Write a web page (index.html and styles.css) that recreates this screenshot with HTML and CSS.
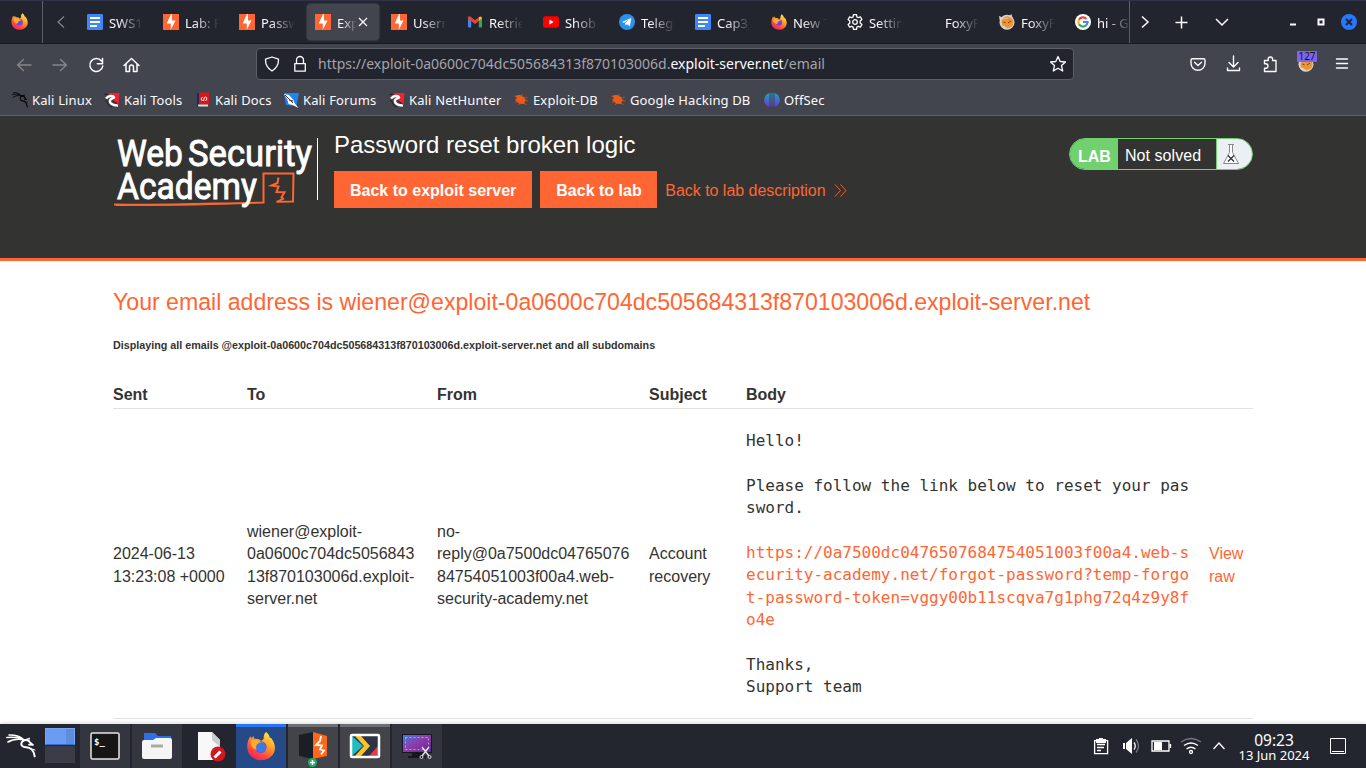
FILE: index.html
```html
<!DOCTYPE html>
<html lang="en">
<head>
<meta charset="utf-8">
<title>Exploit Server: Password reset broken logic</title>
<link rel="stylesheet" href="styles.css">
</head>
<body>
<svg class="defs" width="0" height="0" aria-hidden="true">
  <defs>
    <linearGradient id="flame" x1=".8" y1="0" x2=".2" y2="1"><stop offset="0" stop-color="#fff04a"/><stop offset=".4" stop-color="#ff9a2a"/><stop offset=".75" stop-color="#ff4141"/><stop offset="1" stop-color="#e81f6f"/></linearGradient>
    <linearGradient id="teal" x1="0" y1="0" x2="0" y2="1"><stop offset="0" stop-color="#1ba6c4"/><stop offset="1" stop-color="#6a35d8"/></linearGradient>
    <linearGradient id="screen" x1="0" y1="0" x2="1" y2="1"><stop offset="0" stop-color="#3b7de0"/><stop offset=".5" stop-color="#8e3aa6"/><stop offset="1" stop-color="#5a2a8c"/></linearGradient>
    <symbol id="firefox" viewBox="0 0 16 16"><path fill="url(#flame)" d="M10.800.3c1.500 1.200 1.900 2.300 2 3.100.5-.1.9.2 1.200.7 2.400 3.500 2.200 7.300-.3 9.600-3.200 3-8.300 2.800-11.200-.1C.1 11.200-.2 7.400 1.300 4.100L2 2.600l.8 1.100 1-1.200.6 1.600c1.500-.2 2.900.2 3.800 1.200L9.500 4C9.300 2.700 9.700 1.300 10.800.3z"/><circle cx="7.900" cy="8.600" r="3.200" fill="#7543df"/><path fill="#ffad2e" d="M2.400 5.100c2-.9 4-.4 5.500.8l1.800.4c-.4 1-2.400 1-3 1.900-.6.8.2 1.400-1 1.800C3.500 9.600 2 7.500 2.400 5.100z"/></symbol>
    <symbol id="doc" viewBox="0 0 16 16"><rect width="16" height="16" rx="1.300" fill="#4285f4"/><path stroke="#fff" stroke-width="1.800" d="M3 4h10M3 8h10M3 12h7"/></symbol>
    <symbol id="burp" viewBox="0 0 16 16"><path fill="#ff6633" d="M0 0h16v16H0z"/><path fill="#fff" d="M9 0v6.600h3.500L7.800 15.800V9.400H3.700L8 0z"/></symbol>
    <symbol id="gmail" viewBox="0 0 16 16"><path fill="#4285f4" d="M1 4.500l3.200 2.300v6.700H2a1 1 0 0 1-1-1z"/><path fill="#34a853" d="M15 4.500l-3.200 2.300v6.700H14a1 1 0 0 0 1-1z"/><path fill="#ea4335" d="M1 3c.7-1 2-.8 3.200.3L8 6.200l3.800-2.900v3.700L8 9.900 1 4.700z"/><path fill="#fbbc04" d="M11.800 3.300C13.500 2 15 2.300 15 4.700L11.800 7z"/></symbol>
    <symbol id="youtube" viewBox="0 0 16 16"><rect y="2.300" width="16" height="11.400" rx="2.500" fill="#f00"/><path fill="#fff" d="M6.400 5.500v5l4.300-2.500z"/></symbol>
    <symbol id="telegram" viewBox="0 0 16 16"><circle cx="8" cy="8" r="8" fill="#2c91ee"/><path fill="#fff" d="M2.800 7.900l9.500-3.800-1.400 8.100-3-2-1.500 1.400-.3-2.500 4.200-3.500-5.300 3.200z"/></symbol>
    <symbol id="gear" viewBox="0 0 16 16"><path fill="none" stroke="#fbfbfe" stroke-width="1.300" stroke-linejoin="round" d="M6.500.7h3l.4 2.200 1.400.8 2.100-.8 1.500 2.600-1.700 1.500v2l1.700 1.500-1.500 2.600-2.100-.8-1.400.8-.4 2.200h-3l-.4-2.200-1.400-.8-2.100.8-1.500-2.600L2.800 9V7L1.100 5.500l1.500-2.600 2.100.8 1.400-.8z"/><circle cx="8" cy="8" r="2.300" fill="none" stroke="#fbfbfe" stroke-width="1.300"/></symbol>
    <symbol id="fox" viewBox="0 0 16 16"><circle cx="8" cy="8.300" r="7.500" fill="#d9d3cc"/><circle cx="8.500" cy="8.200" r="6" fill="#ed9434"/><path fill="#d9d3cc" d="M0 2l5 2-4 4zM12.500 0l1 4.500-4-2zM2 11.500l3 .5 3 2-2 1.500z"/><path stroke="#6b421b" d="M4.500 8l2 .8M9 9l3-2"/><path stroke="#f7c176" d="M5 5l4-1"/></symbol>
    <symbol id="google" viewBox="0 0 16 16"><circle cx="8" cy="8" r="8" fill="#fff"/><g fill="none" stroke-width="2.200"><path stroke="#ea4335" d="M11.400 4.900A4.600 4.600 0 0 0 4 5.700"/><path stroke="#fbbc05" d="M4 5.700a4.600 4.600 0 0 0 0 4.600"/><path stroke="#34a853" d="M4 10.300a4.600 4.600 0 0 0 7 1.100"/><path stroke="#4285f4" d="M11 11.400A4.600 4.600 0 0 0 12.600 8H8"/></g></symbol>
    <symbol id="kali" viewBox="0 0 30 24" preserveAspectRatio="none"><g fill="none" stroke="currentColor" stroke-linecap="round" stroke-linejoin="round"><path stroke-width="1.500" d="M3 1c6-.3 10 .8 14 4M.8 3.500C6 2.800 12 3 17 5.500M2 8C6 5.500 10 5 15.500 5.500"/><path stroke-width="2" d="M23 7c-3-2-6.500-.8-7.500 1.700-.8 2.600 1 4.400 4.500 4.600 4.500.3 7.500 2 8.700 9"/><path stroke-width="1.700" d="M17 6.500c2.500-1.500 5.500-.5 7 2l3 2.500-4-.3"/><path stroke-width="1" d="M20 5.500L23.500 4l-1 3M24 14.500l5 1.500"/></g></symbol>
    <symbol id="redtool" viewBox="0 0 16 16"><path fill="#ed2330" d="M4 1h11.500L14.500 13 9 9z"/><path fill="none" stroke="#fff" stroke-width="2.500" d="M2 6.500c3-3.500 7.500-2.800 8-1.200-.5 1.500-4 .8-4.200 3.700 0 3 3.400 4.300 8.200 4.500"/><path fill="none" stroke="#202024" d="M1 8.500l2 .5c0 3 2 5 5 6M.5 2.500l4-.5M8.500 8.500l5 3.500"/></symbol>
    <symbol id="bug" viewBox="0 0 16 16"><path fill="#ee5a16" d="M1.500 4l4-1C8.500 3 12 5 12.500 8l-1.500 4-5-.5-4-3.500L4 6z"/><path stroke="#d95619" stroke-width=".8" d="M7 4l3-1.500M11 6l3.500-.5M12 8.500l3 .5M10 11l3.500 1.500M5 9l-3 1.500M8 11l-3 1.500"/></symbol>
    <symbol id="offsec" viewBox="0 0 16 16"><g fill="url(#teal)"><path d="M5.500 1v14C-1.500 13-1.500 3 5.500 1zM10.500 1v14c7-2 7-12 0-14z"/><path d="M6.600.8h.9v14.500L6.600 13zM8.500.8h.9V13l-.9 2.300z"/></g></symbol>
  </defs>
</svg>

<header class="browser">
  <div class="tabstrip">
    <div class="pinned"><svg width="17" height="17"><use href="#firefox"/></svg></div>
    <svg class="scroll-left" width="34" height="43" viewBox="0 0 34 43"><path d="M21 15.500l-6 5.500 6 5.500"/></svg>
    <nav class="tabs">
      <div class="tab"><svg><use href="#doc"/></svg><span>SWS1</span></div>
      <div class="tab"><svg><use href="#burp"/></svg><span>Lab: P</span></div>
      <div class="tab"><svg><use href="#burp"/></svg><span>Passw</span></div>
      <div class="tab active"><svg><use href="#burp"/></svg><span>Exp</span><svg class="close" viewBox="0 0 16 16"><path d="M4 4l8 8M12 4l-8 8"/></svg></div>
      <div class="tab"><svg><use href="#burp"/></svg><span>Usern</span></div>
      <div class="tab"><svg><use href="#gmail"/></svg><span>Retrie</span></div>
      <div class="tab"><svg><use href="#youtube"/></svg><span>Shob</span></div>
      <div class="tab"><svg><use href="#telegram"/></svg><span>Teleg</span></div>
      <div class="tab"><svg><use href="#doc"/></svg><span>Cap3_</span></div>
      <div class="tab"><svg><use href="#firefox"/></svg><span>New T</span></div>
      <div class="tab"><svg><use href="#gear"/></svg><span>Settin</span></div>
      <div class="tab"><svg></svg><span>FoxyP</span></div>
      <div class="tab"><svg><use href="#fox"/></svg><span>FoxyP</span></div>
      <div class="tab"><svg><use href="#google"/></svg><span>hi - G</span></div>
    </nav>
    <svg class="strip-tools" width="235" height="43" viewBox="0 0 235 43"><path d="M11 15.500l6 5.500-6 5.500M44.500 21.500h12M50.500 15.500v12M85 18l6 6 6-6"/><path stroke-width="2" d="M159 23.500h6"/><path stroke-width="2" d="M187.500 18.500h5v5h-5z"/><circle cx="218" cy="21" r="8" fill="#2777ff" stroke="none"/><path stroke="#23252e" stroke-width="2" d="M215 18l6 6M221 18l-6 6"/></svg>
  </div>
  <div class="navbar">
    <svg class="nav-icons" width="256" height="40" viewBox="0 0 256 40"><g stroke="#85868c"><path d="M31 21H17.500M23.500 15.500L17.500 21l6 5.500M53 21h13.500M60.500 15.500l6 5.500-6 5.500"/></g><g stroke="#fbfbfe" stroke-width="1.500"><path d="M101.500 17a6.500 6.500 0 1 0 1.300 5M102.500 14.500v5.200h-5.200"/><path d="M124 21.500l7.500-7 7.500 7M126 20v7.500h3.500V23a2 2 0 0 1 4 0v4.500h3.500V20"/></g></svg>
    <div class="urlbar">
      <svg width="61" height="30" viewBox="0 0 61 30"><path d="M15 8l6.500 2.200c.3 5.500-2.500 9.300-6.500 11.800-4-2.500-6.800-6.300-6.500-11.800zM37.800 14.700h10.500v7.500H37.800zM39.500 14.500V11a3.500 3.500 0 0 1 7 0v3.500"/></svg>
      <div class="url">https://exploit-0a0600c704dc505684313f870103006d.<b>exploit-server.net</b>/email</div>
      <svg width="30" height="30" viewBox="0 0 30 30"><path d="M15 7.500l2.200 5 5.300.5-4 3.600 1.200 5.400-4.700-2.800-4.700 2.800 1.200-5.400-4-3.600 5.300-.5z"/></svg>
    </div>
    <svg class="nav-tools" width="180" height="40" viewBox="0 0 180 40"><path d="M6.500 14.800h11a1.500 1.500 0 0 1 1.500 1.500v3a7 7 0 0 1-14 0v-3a1.500 1.500 0 0 1 1.500-1.500zM8.500 18.300l3.500 3.200 3.500-3.200M47.500 12v11M43 18.500l4.500 4.500 4.500-4.500M41.500 24v2.500h12V24M78.500 16.500h3.700v-1.300a2.200 2.200 0 0 1 4.400 0v1.300H90v11H78.500v-3.200h1.200a2.200 2.200 0 0 0 0-4.500h-1.200zM150.500 15h11M150.500 19.500h11M150.500 24h11"/></svg>
    <div class="foxy"><svg width="16" height="16"><use href="#fox"/></svg><span>127</span></div>
  </div>
  <div class="bookmarks">
    <div class="bm" style="width:92px"><svg class="black"><use href="#kali"/></svg>Kali Linux</div>
    <div class="bm" style="width:92px"><svg><use href="#redtool"/></svg>Kali Tools</div>
    <div class="bm tight" style="width:87px"><svg viewBox="0 0 16 16"><path fill="#1c2860" d="M1 1h3v14H1z"/><path fill="#d81818" d="M3 .5h10v12H3z"/><path fill="#ddd" d="M2 12.500h10v2H2z"/><path fill="none" stroke="#fff" d="M6.500 5L5 7l1.500 2M9.500 4.500L11 7 9.500 9M8.500 5l-1 4"/></svg>Kali Docs</div>
    <div class="bm" style="width:106px"><svg viewBox="0 0 16 16"><path fill="#2382ef" d="M1 1h15l-2.500 13L3 13z"/><path fill="#fff" d="M1 2l5 1 4.500 5 1 3 4 5-6-3-4-1-1-4z"/><path stroke="#334" d="M2 3l8 8M6 8l4 1"/></svg>Kali Forums</div>
    <div class="bm" style="width:124px"><svg><use href="#redtool"/></svg>Kali NetHunter</div>
    <div class="bm" style="width:97px"><svg><use href="#bug"/></svg>Exploit-DB</div>
    <div class="bm" style="width:154px"><svg><use href="#bug"/></svg>Google Hacking DB</div>
    <div class="bm"><svg><use href="#offsec"/></svg>OffSec</div>
  </div>
</header>

<section class="lab-header">
  <div class="container lab-row">
    <svg class="logo" width="206" height="76" viewBox="0 0 206 76">
      <g fill="none" stroke="#ff6633" stroke-width="2"><path d="M1 66.500c45 1.200 88-.8 149.500-2V35.500h30l-.5 28-16.500.3"/><path stroke-width="1" d="M3 67.500l80-.5 65-2.500"/><path d="M165.500 39.500l-1 5.500-6 2.500 7 1-2 5.500 8 .3-3 5 1.500 1.500-6 3"/></g>
      <g fill="#fff" stroke="#fff" stroke-width=".9" font-family="Roboto, sans-serif" font-weight="400" font-size="37"><text x="4" y="28" textLength="66" lengthAdjust="spacingAndGlyphs">Web</text><text x="75" y="28" textLength="124" lengthAdjust="spacingAndGlyphs">Security</text><text x="4" y="60.500" textLength="140" lengthAdjust="spacingAndGlyphs">Academy</text></g>
      <path stroke="#fff" d="M204.500 0v62"/>
    </svg>
    <div class="title">
      <h2>Password reset broken logic</h2>
      <div class="actions"><a class="button">Back to exploit server</a><a class="button second">Back to lab</a><a class="back">Back to lab description <svg width="13" height="13" viewBox="0 0 13 13"><path d="M1 .5l5.500 6L1 12.500M6.500.5l5.500 6-5.500 6"/></svg></a></div>
    </div>
    <div class="status"><b>LAB</b><p>Not solved</p><span><svg width="18" height="22" viewBox="0 0 18 22"><path fill="#fff" stroke="#888" d="M6 1.500h6M7.500 1.500v8L1.500 20.500h15l-6-11v-8"/><path stroke="#333" stroke-width="1.300" d="M6 12.500l6 6M12 12.500l-6 6"/></svg></span></div>
  </div>
</section>

<main class="container mail">
  <h1>Your email address is wiener@exploit-0a0600c704dc505684313f870103006d.exploit-server.net</h1>
  <h5>Displaying all emails @exploit-0a0600c704dc505684313f870103006d.exploit-server.net and all subdomains</h5>
  <table>
    <colgroup><col class="c-sent"><col class="c-to"><col class="c-from"><col class="c-subject"><col class="c-body"><col></colgroup>
    <thead><tr><th>Sent</th><th>To</th><th>From</th><th>Subject</th><th>Body</th><th></th></tr></thead>
    <tbody><tr>
      <td>2024-06-13<br>13:23:08 +0000</td>
      <td>wiener@exploit-<br>0a0600c704dc5056843<br>13f870103006d.exploit-<br>server.net</td>
      <td>no-<br>reply@0a7500dc04765076<br>84754051003f00a4.web-<br>security-academy.net</td>
      <td>Account<br>recovery</td>
      <td class="body"><pre>Hello!

Please follow the link below to reset your pas
sword.

<a>https://0a7500dc0476507684754051003f00a4.web-s
ecurity-academy.net/forgot-password?temp-forgo
t-password-token=vggy00b11scqva7g1phg72q4z9y8f
o4e</a>

Thanks,
Support team</pre></td>
      <td><a>View<br>raw</a></td>
    </tr></tbody>
  </table>
</main>

<footer class="taskbar">
  <svg class="kali-menu" width="44" height="44" viewBox="0 0 44 44"><use href="#kali" x="6" y="10" width="30" height="24"/></svg>
  <div class="pager"><i></i><i></i></div>
  <div class="task"><svg width="50" height="44" viewBox="0 0 50 44"><rect x="11" y="9" width="28" height="26" rx="1.500" fill="#161616" stroke="#e6e6e6" stroke-width="1.500"/><text x="14" y="21" fill="#fff" font-family="DejaVu Sans Mono, monospace" font-weight="700" font-size="9">$_</text></svg></div>
  <div class="task"><svg width="50" height="44" viewBox="0 0 50 44"><path fill="#2c6fe6" d="M12 9h11l3 3h13v8H12z"/><path fill="#f5f5f5" d="M10 18q0-2 2-2h9l3-2h14q2 0 2 2v17q0 2-2 2H12q-2 0-2-2z"/><path stroke="#aaa" stroke-width="3" d="M19 22h12"/></svg></div>
  <div class="task plain"><svg width="50" height="44" viewBox="0 0 50 44"><path fill="#f8f8f8" d="M14 8h14l8 8v20H14z"/><path fill="#ccc" d="M28 8l8 8v7l-8-7z"/><circle cx="34" cy="30" r="7.500" fill="#d3171f"/><path stroke="#fff" stroke-width="3" d="M30.500 33.500l6-6"/></svg></div>
  <div class="task focus"><svg width="50" height="44" viewBox="0 0 50 44"><use href="#firefox" x="10.500" y="7.500" width="29" height="29"/><circle cx="25" cy="23.500" r="5" fill="#387be8"/></svg></div>
  <div class="task open"><svg width="50" height="44" viewBox="0 0 50 44"><path fill="#1c1e25" d="M11 11l14-3v27l-14-3z"/><path fill="#ff681c" d="M25 8l14 4v20l-14 3z"/><path fill="none" stroke="#fff" stroke-width="1.800" d="M33 12l-1 5-4 4 6 .5-2 4 4 1-3 4"/><circle cx="24.500" cy="38.500" r="4.500" fill="#1caf66"/><path stroke="#fff" stroke-width="1.500" d="M22 38.500h5M24.500 36v5"/></svg></div>
  <div class="task open"><svg width="50" height="44" viewBox="0 0 50 44"><rect x="11" y="11" width="28" height="22" fill="#2c3445"/><path fill="#21bcc1" d="M12 12l11 10-11 10z"/><path fill="#e33c49" d="M38 22v11H28z"/><path fill="none" stroke="#ffc22e" stroke-width="4.500" d="M17 11l10 11-10 11"/><rect x="11" y="11" width="28" height="22" rx="1" fill="none" stroke="#fff" stroke-width="2.500"/></svg></div>
  <div class="task"><svg width="50" height="44" viewBox="0 0 50 44"><path fill="#17171d" d="M20 28h10v5H20zM16 32h18v2H16z"/><rect x="10.500" y="10.500" width="29" height="18" fill="url(#screen)" stroke="#17171d"/><rect x="13.500" y="13.500" width="23" height="12" fill="none" stroke="#b79de0" stroke-dasharray="2 2"/><path fill="none" stroke="#e9e9e9" stroke-width="1.300" d="M30 23l7 9M37 23l-7 9"/><circle cx="29.500" cy="33" r="1.500" fill="none" stroke="#ddd"/><circle cx="37.500" cy="33" r="1.500" fill="none" stroke="#ddd"/></svg></div>
  <svg class="tray" width="146" height="44" viewBox="0 0 146 44"><g fill="none" stroke="#fff" stroke-width="1.300"><path d="M10.600 16.600h13v13h-13zM13 20.500h8M13 23.500h7M13 26.500h4"/><path fill="#fff" stroke="none" d="M12 15h3v-1h4v1h3v4H12zM39 19h2v6h-2zM42 19l6-5v16l-6-5z"/><path d="M50 18.500q2.500 3.500 0 7"/><path stroke="#777981" d="M52 15.500q5 6.500 0 13"/><path d="M68 17h17v10H68zM86.500 20v4"/><path fill="#fff" stroke="none" d="M70 18h8v8h-8z"/><path stroke="#777981" d="M97 18q10-7 20 0"/><path d="M100 21.500q7-5 14 0M102.500 25q4.500-3.500 9 0"/><circle cx="107" cy="28" r="1.500"/><path d="M129.500 25l5.500-6 5.500 6"/></g></svg>
  <div class="clock"><time>09:23</time><span>13 Jun 2024</span></div>
  <svg class="desktop" width="50" height="44" viewBox="0 0 50 44"><path fill="none" stroke="#fff" stroke-width="1" d="M15.500 14.500h15v15h-15zM17 27.500h12"/></svg>
</footer>
</body>
</html>
```

FILE: styles.css
```css
* { box-sizing: border-box; }
body { margin: 0; width: 1366px; height: 768px; overflow: hidden; display: flex; flex-direction: column; background: #fff; color: #333332; font: 16px/22.4px "Liberation Sans", Arial, sans-serif; }
h1, h2, h5, p, pre { margin: 0; }
svg { display: block; flex: none; }
.defs { position: absolute; }
.container { width: 1140px; margin: 0 auto; }

/* Browser chrome */
.browser { flex: none; height: 116px; background: #43454e; border-bottom: 1px solid #5d5f66; color: #fbfbfe; font: 13px/20px "Noto Sans", sans-serif; }
.tabstrip { height: 44px; display: flex; background: #23252e; border-top: 1px solid #303248; border-bottom: 1px solid #171920; }
.pinned { width: 43px; border-right: 1px solid #5d5f67; padding: 12px 0 0 11px; }
.scroll-left { fill: none; stroke: #85868c; stroke-width: 1.2; }
.tabs { display: flex; width: 1054px; overflow: hidden; border-right: 1px solid #5d5f67; }
.tab { flex: none; width: 76px; padding: 0 0 0 10px; display: flex; align-items: center; gap: 6px; height: 42px; }
.tab svg { width: 16px; height: 16px; }
.tab span { width: 34px; height: 20px; line-height: 22px; overflow: hidden; white-space: nowrap; -webkit-mask-image: linear-gradient(to right, #000 25%, transparent); mask-image: linear-gradient(to right, #000 25%, transparent); }
.tab.active { width: 72px; height: 36px; margin: 3px 2px 0; padding-left: 8px; background: #43454e; border-radius: 4px; box-shadow: 0 0 2px #62646b; }
.tab.active span { width: 20px; }
.tab .close { margin-left: -8px; fill: none; stroke: #fbfbfe; stroke-width: 1.2; }
.strip-tools { margin-left: 1px; fill: none; stroke: #fbfbfe; stroke-width: 1.5; }
.navbar { height: 40px; display: flex; }
.nav-icons { fill: none; stroke-width: 1.3; stroke-linecap: round; stroke-linejoin: round; }
.urlbar { width: 818px; height: 32px; margin-top: 4px; display: flex; background: #23252e; border: 1px solid #5d5f67; border-radius: 4px; }
.urlbar svg { fill: none; stroke: #fbfbfe; stroke-width: 1.3; stroke-linejoin: round; }
.url { flex: 1; color: #a3a4aa; font-size: 14px; line-height: 30px; white-space: nowrap; }
.url b { color: #fbfbfe; font-weight: 400; }
.nav-tools { margin-left: 112px; fill: none; stroke: #fbfbfe; stroke-width: 1.4; stroke-linejoin: round; stroke-linecap: round; }
.foxy { position: relative; width: 20px; height: 22px; margin: 7px 0 0 -69px; padding: 5px 0 0 1px; }
.foxy span { position: absolute; left: 0; top: 0; width: 20px; height: 11px; background: #7d63ef; border-radius: 1px; color: #15141a; font-size: 10px; line-height: 11px; text-align: center; }
.bookmarks { display: flex; padding: 6px 0 0 12px; }
.bm { display: flex; align-items: center; gap: 4px; white-space: nowrap; height: 20px; letter-spacing: .14px; }
.bm.tight { gap: 3px; }
.bm svg { width: 16px; height: 16px; }
.bm .black { color: #08080a; }

/* Lab banner */
.lab-header { flex: none; height: 145px; background: #333332; border-bottom: 3px solid #ff6633; color: #fff; }
.lab-row { display: flex; }
.logo { margin-top: 22px; }
.title { margin: 14px 0 0 15px; flex: 1; }
h2 { font-size: 24px; line-height: 30px; font-weight: 400; }
.actions { display: flex; margin-top: 11px; gap: 8px; line-height: 37px; }
.button { height: 37px; padding: 1px 16px 0; background: #ff6633; font-weight: 700; }
.button.second { width: 117px; white-space: nowrap; }
.back { display: flex; align-items: center; height: 38px; gap: 8px; color: #ff6633; letter-spacing: -.03px; }
.back svg { fill: none; stroke: #ff6633; stroke-width: .9; }
.status { width: 184px; height: 32px; margin-top: 22px; display: flex; border: 1px solid #70d16e; border-radius: 16px; overflow: hidden; line-height: 33px; }
.status b { width: 48px; padding: 1px 0 0 8px; background: #70d16e; font-size: 16px; }
.status p { width: 98px; padding-left: 7px; letter-spacing: .05px; }
.status span { flex: 1; border-left: 1px solid #70d16e; background: #eaf0f3; padding: 4px 0 0 5px; }

/* Mailbox */
.mail { flex: 1; min-height: 0; overflow: hidden; }
h1 { margin-top: 26px; color: #ff6633; font-size: 23.12px; line-height: 31px; font-weight: 400; white-space: nowrap; }
h5 { margin-top: 16px; font-size: 10.74px; line-height: 22px; white-space: nowrap; }
table { width: 1140px; margin-top: 24px; table-layout: fixed; border-collapse: collapse; }
th { height: 28px; padding: 3px 0 0; text-align: left; border-bottom: 1px solid #e2e2e2; white-space: nowrap; }
td { height: 310px; padding: 5px 0 0; vertical-align: middle; border-bottom: 1px solid #e2e2e2; }
td.body { padding-top: 2.400px; }
.c-sent { width: 134px; }
.c-to { width: 190px; }
.c-from { width: 212px; }
.c-subject { width: 97px; }
.c-body { width: 463px; }
pre { font: 16px/22.4px "DejaVu Sans Mono", monospace; }
td a { color: #ff6633; }

/* Desktop panel */
.taskbar { flex: none; height: 44px; display: flex; background: #24262f; color: #fff; font-family: "Noto Sans", sans-serif; box-shadow: 0 -1px 4px rgba(0,0,0,.15); }
.pager { width: 35px; padding-top: 4px; display: flex; flex-direction: column; gap: 1px; margin-left: 1px; }
.pager i { width: 30px; height: 17px; background: #3b3c45; }
.pager i:first-child { background: linear-gradient(to right, #6a9df2 20px, #5c8de0 20px); border: 1px solid #79a6f4; border-bottom-color: #3570d5; }
.task { width: 50px; margin-right: 2px; background: #34363f; }
.task.plain { background: none; }
.task.focus { background: #264a87; box-shadow: inset 0 3px #2777f4; }
.task.open { background: #43444a; box-shadow: inset 0 3px #6d6e73; }
.kali-menu { color: #fff; }
.tray { margin-left: auto; }
.clock { width: 84px; margin-left: 2px; text-align: center; white-space: nowrap; }
.clock time { display: block; font-size: 15.5px; line-height: 18px; margin-top: 7px; }
.clock span { display: block; font-size: 13px; line-height: 12px; }
.desktop { margin-right: 1px; margin-left: -1px; }
```
